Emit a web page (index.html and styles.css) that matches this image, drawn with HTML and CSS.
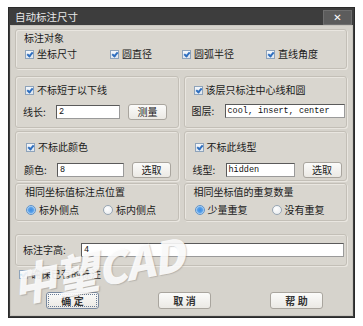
FILE: index.html
```html
<!DOCTYPE html>
<html>
<head>
<meta charset="utf-8">
<link rel="stylesheet" href="styles.css">
</head>
<body>
<div class="window">
  <div class="titlebar">
    <span class="title">自动标注尺寸</span>
    <span class="close">✕</span>
  </div>
  <div class="client">
    <div class="group g1">
      <div class="gtitle">标注对象</div>
      <div class="row4">
        <label class="chk"><span class="box on"></span>坐标尺寸</label>
        <label class="chk"><span class="box on"></span>圆直径</label>
        <label class="chk"><span class="box on"></span>圆弧半径</label>
        <label class="chk"><span class="box on"></span>直线角度</label>
      </div>
    </div>

    <div class="pair p2">
      <div class="group half">
        <label class="chk first"><span class="box on"></span>不标短于以下线</label>
        <div class="field">
          <span class="lbl">线长:</span>
          <span class="input w-len">2</span>
          <span class="btn">测量</span>
        </div>
      </div>
      <div class="group half">
        <label class="chk first"><span class="box on"></span>该层只标注中心线和圆</label>
        <div class="field">
          <span class="lbl">图层:</span>
          <span class="input w-layer">cool, insert, center</span>
        </div>
      </div>
    </div>

    <div class="pair p3">
      <div class="group half">
        <label class="chk first"><span class="box on"></span>不标此颜色</label>
        <div class="field">
          <span class="lbl">颜色:</span>
          <span class="input w-color">8</span>
          <span class="btn">选取</span>
        </div>
      </div>
      <div class="group half">
        <label class="chk first"><span class="box on"></span>不标此线型</label>
        <div class="field">
          <span class="lbl">线型:</span>
          <span class="input w-ltype">hidden</span>
          <span class="btn">选取</span>
        </div>
      </div>
    </div>

    <div class="pair p4">
      <div class="group half">
        <div class="gtitle">相同坐标值标注点位置</div>
        <div class="radios">
          <label class="rad"><span class="dot on"></span>标外侧点</label>
          <label class="rad"><span class="dot"></span>标内侧点</label>
        </div>
      </div>
      <div class="group half">
        <div class="gtitle">相同坐标值的重复数量</div>
        <div class="radios">
          <label class="rad"><span class="dot on"></span>少量重复</label>
          <label class="rad"><span class="dot"></span>没有重复</label>
        </div>
      </div>
    </div>

    <div class="group g5">
      <span class="lbl">标注字高:</span>
      <span class="input w-height">4</span>
    </div>

    <label class="chk lone"><span class="box on"></span>确保已有的标注</label>

    <div class="buttons">
      <span class="btn big focus">确 定</span>
      <span class="btn big">取 消</span>
      <span class="btn big">帮 助</span>
    </div>

    <div class="watermark">中望CAD</div>
  </div>
</div>
</body>
</html>
```

FILE: styles.css
```css
html, body {
  margin: 0;
  padding: 0;
  background: #ffffff;
}
body {
  font-family: "Noto Sans CJK SC", "DejaVu Sans", sans-serif;
  font-size: 10px;
  color: #1a1a1a;
}
.window {
  margin: 7px 0 0 8px;
  width: 347px;
  height: 311px;
  box-sizing: border-box;
  background: #3d3d3d;
  border: 1px solid #2a2a2a;
  padding: 0 1px 1px 1px;
  display: flex;
  flex-direction: column;
}
.titlebar {
  height: 17px;
  display: flex;
  align-items: center;
  justify-content: space-between;
}
.title {
  color: #e8e8e8;
  font-size: 10.5px;
  padding-left: 5px;
  line-height: 12px;
}
.close {
  width: 29px;
  height: 15px;
  margin: 1px 1px 0 0;
  background: #5c5c5c;
  border: 1px solid #6e6e6e;
  box-sizing: border-box;
  color: #ffffff;
  font-family: "DejaVu Sans", sans-serif;
  font-weight: bold;
  font-size: 10px;
  line-height: 13px;
  text-align: center;
}
.client {
  position: relative;
  flex: 1;
  background: #d6d3cc;
  border: 1px solid #c8c5be;
  padding: 3px 5px 0 4px;
  display: flex;
  flex-direction: column;
  overflow: hidden;
}
.group {
  box-sizing: border-box;
  border: 1px solid #c3bfb7;
  border-radius: 3px;
  box-shadow: inset 1px 1px 0 #e9e6e0, 1px 1px 0 #e9e6e0;
  background: #d9d6cf;
}
.gtitle {
  line-height: 12px;
  height: 12px;
}
.g1 {
  height: 40px;
  padding: 2px 0 0 7px;
}
.g1 .gtitle {
  padding-left: 1px;
}
.row4 {
  margin-top: 4px;
  display: grid;
  grid-template-columns: 85px 72px 84px auto;
  padding-left: 2px;
}
.chk, .rad {
  display: flex;
  align-items: center;
  height: 12px;
  line-height: 12px;
  white-space: nowrap;
}
.box {
  width: 9px;
  height: 9px;
  box-sizing: border-box;
  border: 1px solid #8ea3ba;
  background: linear-gradient(#f4f7fb, #dfe6ee);
  margin-right: 3px;
  position: relative;
  flex: none;
}
.box.on::after {
  content: "";
  position: absolute;
  left: 2px;
  top: 0px;
  width: 2px;
  height: 4px;
  border: solid #2f6fbf;
  border-width: 0 2px 2px 0;
  transform: rotate(40deg);
}
.pair {
  display: flex;
  gap: 5px;
}
.half {
  flex: 1;
}
.p2 {
  margin-top: 7px;
  height: 52px;
}
.p2 .half {
  padding: 7px 0 0 9px;
}
.p3 {
  margin-top: 3px;
  height: 50px;
}
.p3 .half {
  padding: 9px 0 0 10px;
}
.p4 {
  margin-top: 2px;
  height: 38px;
}
.p4 .half {
  padding: 2px 0 0 8px;
}
.p4 .gtitle {
  padding-left: 1px;
}
.field {
  display: flex;
  align-items: center;
  margin-top: 8px;
  margin-left: -2px;
}
.p3 .field {
  margin-top: 9px;
}
.lbl {
  width: 33px;
  flex: none;
  line-height: 12px;
}
.input {
  box-sizing: border-box;
  height: 14px;
  background: #ffffff;
  border: 1px solid #5a5a5a;
  border-right-color: #9a9a9a;
  border-bottom-color: #9a9a9a;
  font-family: "Liberation Mono", "DejaVu Sans Mono", monospace;
  font-size: 8.5px;
  line-height: 12px;
  padding-left: 2px;
  color: #111;
  white-space: nowrap;
  overflow: hidden;
}
.w-len { width: 64px; }
.w-layer { width: 120px; }
.w-color { width: 67px; }
.w-ltype { width: 69px; }
.btn {
  box-sizing: border-box;
  height: 16px;
  width: 39px;
  margin-left: 8px;
  border: 1px solid #a9a59e;
  border-radius: 3px;
  background: linear-gradient(#fbfbfa, #ebe9e4);
  text-align: center;
  line-height: 14px;
  font-size: 10px;
  color: #222;
  flex: none;
}
.radios {
  display: grid;
  grid-template-columns: 77px auto;
  margin-top: 6px;
  padding-left: 2px;
}
.dot {
  width: 10px;
  height: 10px;
  box-sizing: border-box;
  border-radius: 50%;
  border: 1px solid #98a6b4;
  background: radial-gradient(circle at 40% 35%, #ffffff, #e4e8ec);
  margin-right: 3px;
  flex: none;
}
.dot.on {
  border-color: #5e93c9;
  background: radial-gradient(circle, #3f8be0 0, #58a1ea 2.5px, #bcd8f4 4px);
}
.g5 {
  margin-top: 13px;
  height: 32px;
  display: flex;
  align-items: center;
  padding: 0 0 0 7px;
}
.g5 .lbl {
  width: 58px;
}
.w-height {
  width: 263px;
}
.lone {
  margin-top: 2px;
  margin-left: 4px;
}
.buttons {
  display: flex;
  margin-top: 12px;
  padding-left: 31px;
}
.btn.big {
  width: 53px;
  height: 17px;
  margin-left: 0;
  line-height: 15px;
  font-weight: bold;
  color: #333;
}
.btn.big + .btn.big {
  margin-left: 59px;
}
.btn.big:last-child {
  margin-left: 57px;
}
.btn.focus {
  outline: 1px dotted #6a7c95;
  outline-offset: -3px;
  border-color: #7a8aa0;
}
.watermark {
  position: absolute;
  left: 6px;
  top: 233px;
  font-family: "Noto Sans CJK SC", "DejaVu Sans", sans-serif;
  font-weight: 900;
  font-style: italic;
  font-size: 44px;
  line-height: 50px;
  letter-spacing: -1px;
  color: rgba(255, 255, 255, 0.88);
  text-shadow: 1px 1px 1px rgba(120, 120, 120, 0.35);
  transform: rotate(-11deg);
  transform-origin: left bottom;
  pointer-events: none;
  white-space: nowrap;
}
```
